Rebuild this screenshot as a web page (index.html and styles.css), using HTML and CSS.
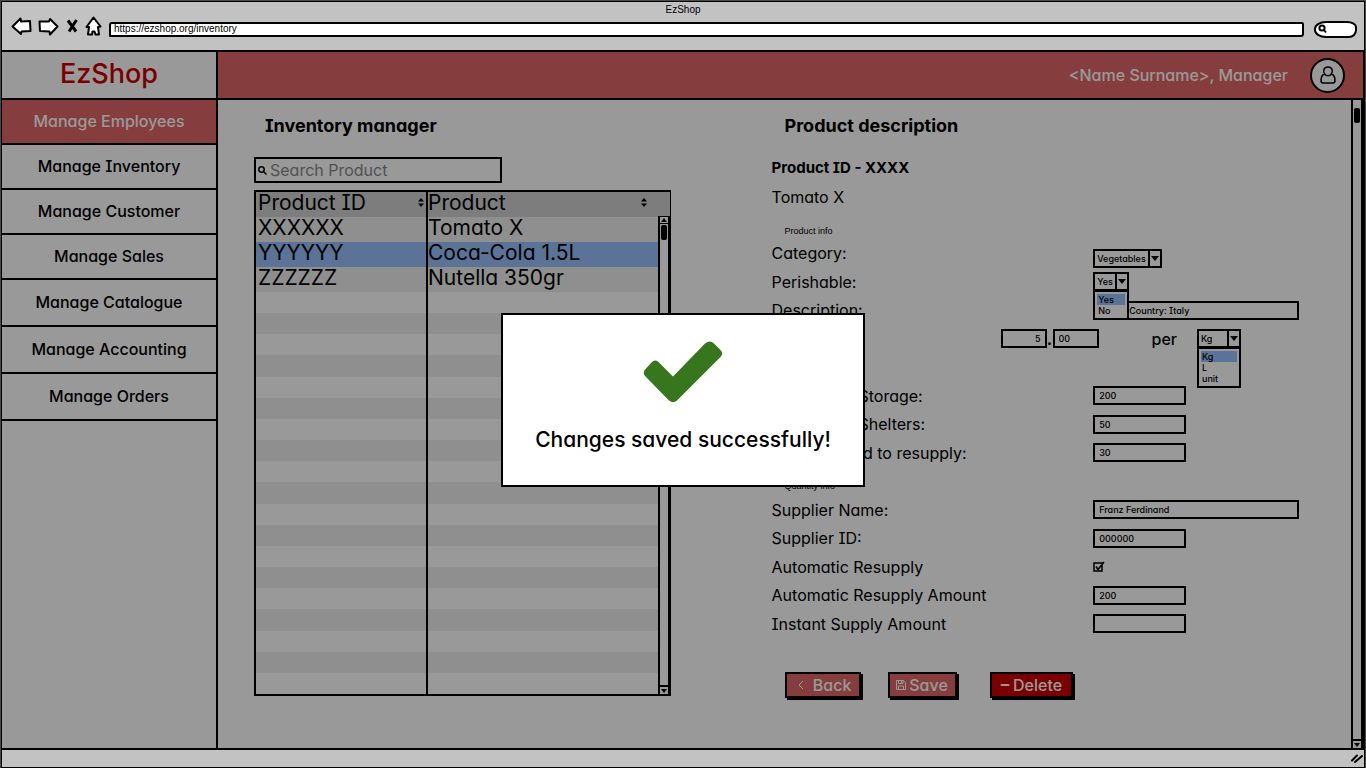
FILE: index.html
```html
<!DOCTYPE html>
<html lang="en">
<head>
<meta charset="utf-8">
<meta name="viewport" content="width=device-width, initial-scale=1">
<title>EzShop</title>
<link rel="stylesheet" href="styles.css">
</head>
<body>
<div class="window">
  <header class="chrome">
    <div class="chrome-title">EzShop</div>
    <div class="chrome-bar">
      <nav class="chrome-nav" aria-label="Browser">
        <button class="chrome-btn" aria-label="Back"><svg width="21" height="20" viewBox="0 0 21 20"><path d="M1.500 10.500 9.500 2.500 10 5.500 19 5 19.500 15 10.500 15.500 10 18Z"/></svg></button>
        <button class="chrome-btn" aria-label="Forward"><svg width="21" height="20" viewBox="0 0 21 20"><path d="M19.500 10.500 12 3 11 5.500 1.500 5.500 2 15 11.500 15.500 12 18.500Z"/></svg></button>
        <button class="chrome-btn" aria-label="Stop"><svg width="14" height="20" viewBox="0 0 14 20"><path class="cross" d="M3 4.500 11 15.500M11.500 4 4 15.500"/></svg></button>
        <button class="chrome-btn" aria-label="Home"><svg width="17" height="20" viewBox="0 0 17 20"><path d="M8.500 1.500 15.500 10.500 13 11 14 18.500 10.500 18.500 9.500 15.500 7.500 15.500 7 18.500 3 18.500 4 11 1.500 11Z"/></svg></button>
      </nav>
      <input class="address" type="text" value="https://ezshop.org/inventory" aria-label="Address">
      <label class="web-search"><svg width="9" height="10" viewBox="0 0 9 10"><circle cx="4" cy="4" r="2.600"/><path d="M6 6 8 8.500"/></svg><input type="text" aria-label="Search the web"></label>
    </div>
  </header>

  <div class="viewport">
    <div class="app">
      <div class="brand">EzShop</div>
      <div class="topbar">
        <span>&lt;Name Surname&gt;, Manager</span>
        <span class="avatar"><svg width="16" height="18" viewBox="0 0 16 18"><path d="M5 8.500C2.500 6 3.500 1 8 1s5.500 5 3 7.500C9.500 10 6.500 10 5 8.500ZM4.500 8C2 9 1 11.500 1 14.500 1 16.500 2 17 3 17h10c1 0 2-.5 2-2.500 0-3-1-5.500-3.500-6.500"/></svg></span>
      </div>

      <nav class="sidebar" aria-label="Sections">
        <a class="current" href="#employees">Manage Employees</a>
        <a href="#inventory">Manage Inventory</a>
        <a href="#customer">Manage Customer</a>
        <a href="#sales">Manage Sales</a>
        <a class="tall" href="#catalogue">Manage Catalogue</a>
        <a class="tall" href="#accounting">Manage Accounting</a>
        <a class="tall" href="#orders">Manage Orders</a>
      </nav>

      <main class="content">
        <section class="inventory">
          <h1>Inventory manager</h1>
          <label class="search"><svg width="9" height="9" viewBox="0 0 9 9"><circle cx="3.500" cy="3.500" r="2.700"/><path d="M5.500 5.500 8.500 8.500"/></svg><input type="text" placeholder="Search Product" aria-label="Search Product"></label>
          <div class="table-box">
            <table>
              <colgroup><col class="col-id"><col><col class="col-bar"></colgroup>
              <thead>
                <tr>
                  <th><div>Product ID<svg width="6" height="9" viewBox="0 0 6 9"><path d="M0 3.500 3 0 6 3.500ZM0 5.500 3 9 6 5.500Z"/></svg></div></th>
                  <th colspan="2"><div class="wide">Product<svg width="6" height="9" viewBox="0 0 6 9"><path d="M0 3.500 3 0 6 3.500ZM0 5.500 3 9 6 5.500Z"/></svg></div></th>
                </tr>
              </thead>
              <tbody>
                <tr class="item"><td>XXXXXX</td><td>Tomato X</td><td></td></tr>
                <tr class="item selected"><td>YYYYYY</td><td>Coca-Cola 1.5L</td><td></td></tr>
                <tr class="item"><td>ZZZZZZ</td><td>Nutella 350gr</td><td></td></tr>
                <tr><td></td><td></td><td></td></tr><tr><td></td><td></td><td></td></tr>
                <tr><td></td><td></td><td></td></tr><tr><td></td><td></td><td></td></tr>
                <tr><td></td><td></td><td></td></tr><tr><td></td><td></td><td></td></tr>
                <tr><td></td><td></td><td></td></tr><tr><td></td><td></td><td></td></tr>
                <tr><td></td><td></td><td></td></tr><tr><td></td><td></td><td></td></tr>
                <tr><td></td><td></td><td></td></tr><tr><td></td><td></td><td></td></tr>
                <tr><td></td><td></td><td></td></tr><tr><td></td><td></td><td></td></tr>
                <tr><td></td><td></td><td></td></tr><tr><td></td><td></td><td></td></tr>
                <tr><td></td><td></td><td></td></tr><tr><td></td><td></td><td></td></tr>
                <tr><td></td><td></td><td></td></tr>
              </tbody>
            </table>
            <div class="scrollbar table-scroll">
              <span class="step"><svg width="6" height="4" viewBox="0 0 6 4"><path d="M0 4 3 0 6 4Z"/></svg></span>
              <span class="thumb"></span>
              <span class="step down"><svg width="6" height="4" viewBox="0 0 6 4"><path d="M0 0 3 4 6 0Z"/></svg></span>
            </div>
          </div>
        </section>

        <section class="product">
          <h2>Product description</h2>
          <p class="product-id">Product ID - XXXX</p>
          <p class="product-name">Tomato X</p>
          <p class="group">Product info</p>
          <form class="fields">
            <div class="row"><label for="category">Category:</label>
              <span class="picker low category"><select id="category"><option>Vegetables</option></select><i><svg width="8" height="5" viewBox="0 0 8 5"><path d="M0 0 4 5 8 0Z"/></svg></i></span></div>
            <div class="row"><label for="perishable">Perishable:</label>
              <span class="picker perishable"><select id="perishable"><option>Yes</option><option>No</option></select><i><svg width="8" height="5" viewBox="0 0 8 5"><path d="M0 0 4 5 8 0Z"/></svg></i>
                <ul class="options"><li class="on">Yes</li><li>No</li></ul></span></div>
            <div class="row"><label for="description">Description:</label><input class="field full country" id="description" type="text" value="Country: Italy"></div>
            <div class="row price"><label for="price">Price:</label>
              <div class="price-parts">
                <input class="field amount units" id="price" type="text" value="5"><b>.</b><input class="field amount" type="text" value="00" aria-label="Cents">
                <label class="per" for="unit">per</label>
                <span class="picker unit"><select id="unit"><option>Kg</option><option>L</option><option>unit</option></select><i><svg width="8" height="5" viewBox="0 0 8 5"><path d="M0 0 4 5 8 0Z"/></svg></i>
                  <ul class="options"><li class="on">Kg</li><li>L</li><li>unit</li></ul></span>
              </div></div>
            <div class="row"></div>
            <div class="row"><label for="storage">Quantity in Storage:</label><input class="field" id="storage" type="text" value="200"></div>
            <div class="row"><label for="shelters">Quantity in Shelters:</label><input class="field" id="shelters" type="text" value="50"></div>
            <div class="row"><label for="resupply">Amount need to resupply:</label><input class="field" id="resupply" type="text" value="30"></div>
            <div class="row"><p class="group low">Quantity info</p></div>
            <div class="row"><label for="supplier">Supplier Name:</label><input class="field full" id="supplier" type="text" value="Franz Ferdinand"></div>
            <div class="row"><label for="supplier-id">Supplier ID:</label><input class="field" id="supplier-id" type="text" value="000000"></div>
            <div class="row"><label for="auto">Automatic Resupply</label>
              <span class="check"><input id="auto" type="checkbox" checked><svg width="12" height="11" viewBox="0 0 12 11"><path d="M1 2H9V10H1ZM3 5.500 5 8.500 11 1"/></svg></span></div>
            <div class="row"><label for="auto-amount">Automatic Resupply Amount</label><input class="field" id="auto-amount" type="text" value="200"></div>
            <div class="row"><label for="instant">Instant Supply Amount</label><input class="field" id="instant" type="text"></div>
          </form>
          <div class="actions">
            <button class="btn back"><svg width="6" height="10" viewBox="0 0 6 10"><path d="M5 1 1 5 5 9"/></svg>Back</button>
            <button class="btn save"><svg width="10" height="10" viewBox="0 0 10 10"><path d="M.5.5H7.500L9.500 2.500V9.500H.5ZM2.500.5V3.500H7V.5M2.500 9.500V6H7.500V9.500M5.500 1V3"/></svg>Save</button>
            <button class="btn delete"><svg width="10" height="10" viewBox="0 0 10 10"><path class="bold" d="M1.500 5H8.500"/></svg>Delete</button>
          </div>
        </section>

        <div class="scrollbar page-scroll">
          <span class="thumb"></span>
          <span class="step down"><svg width="6" height="4" viewBox="0 0 6 4"><path d="M0 0 3 4 6 0Z"/></svg></span>
        </div>
      </main>
    </div>

    <div class="backdrop">
      <div class="modal" role="dialog" aria-labelledby="saved">
        <svg width="80" height="62" viewBox="0 0 80 62"><path d="M30 35.500 62 2.500Q67-1.500 71 2.500L77.500 9Q81 12.500 77.500 16L34 59.500Q30 63 26 59.500L2.500 35.500Q-1 31.500 2.500 28L8.500 21.500Q12.500 17.500 16 21.500Z" class="tick"/></svg>
        <p id="saved">Changes saved successfully!</p>
      </div>
    </div>
  </div>

  <footer class="status"><svg width="14" height="11" viewBox="0 0 14 11"><path d="M2 7.500 7 2.500M5 9 12 3"/></svg></footer>
</div>
</body>
</html>
```
FILE: styles.css
```css
* { box-sizing: border-box; }

body {
  margin: 0;
  height: 100vh;
  background: #4a4a46;
  color: #000;
  font-family: Inter, "Noto Sans", sans-serif;
  font-feature-settings: "cv11", "cv08";
  font-size: 16px;
}

h1, h2, p, ul { margin: 0; padding: 0; }
svg { display: block; flex: none; }
a { color: inherit; text-decoration: none; }
button, input, select { font: inherit; font-feature-settings: inherit; color: inherit; }
input, select { min-width: 0; margin: 0; padding: 0; border: 0; background: none; outline: 0; }

.window {
  display: flex;
  flex-direction: column;
  min-height: 100%;
  padding: 1px 1px 0;
}

/* Browser frame */
.chrome {
  height: 50px;
  border: 1px solid #000;
  background: #c2c2c2;
  font: 10px/16px "Liberation Sans", Arial, sans-serif;
}
.chrome-title { text-align: center; }
.chrome-bar { display: flex; align-items: center; height: 22px; padding: 0 7px 0 9px; }
.chrome-nav { display: flex; align-items: center; gap: 6px; padding-bottom: 6px; }
.chrome-btn { padding: 0; border: 0; background: none; }
.chrome-btn path { fill: #fff; stroke: #000; stroke-width: 2; stroke-linejoin: round; }
.chrome-btn .cross { fill: none; stroke-width: 3; }
.address {
  flex: 1;
  height: 15px;
  margin: 0 10px 0 7px;
  padding: 0 3px;
  border: 2px solid #000;
  border-radius: 3px 2px 3px 1px;
  background: #fff;
}
.web-search {
  display: flex;
  align-items: center;
  width: 43px;
  height: 17px;
  padding-left: 2px;
  border: 2px solid #000;
  border-radius: 12px 10px 8px 12px / 8px 6px 8px 8px;
  background: #fff;
}
.web-search svg { fill: none; stroke: #000; stroke-width: 2; }
.web-search input { width: 20px; }

.viewport { position: relative; display: flex; flex: 1; }
.app {
  display: grid;
  flex: 1;
  grid-template: 48px 1fr / 216px 1fr;
  border: solid #000;
  border-width: 1px 2px 1px 1px;
  background: #fff;
}
.brand {
  border: solid #000;
  border-width: 0 2px 2px 0;
  color: #c00;
  font-size: 27px;
  font-weight: 500;
  line-height: 43px;
  text-align: center;
}
.topbar {
  display: flex;
  align-items: center;
  justify-content: flex-end;
  gap: 22px;
  padding-right: 18px;
  border-bottom: 2px solid #000;
  background: #e06666;
  color: #fff;
  font-weight: 500;
}
.avatar {
  display: grid;
  place-items: center;
  width: 35px;
  height: 35px;
  border: 2px solid #000;
  border-radius: 50%;
  background: #fff;
}
.avatar path { fill: none; stroke: #000; stroke-width: 1.5; }

.sidebar { border-right: 2px solid #000; font-weight: 500; text-align: center; }
.sidebar a { display: block; border-bottom: 2px solid #000; line-height: 43px; }
.sidebar .tall { line-height: 45px; }
.sidebar .current { background: #e06666; color: #fff; }

.content {
  position: relative;
  display: grid;
  grid-template-columns: 417fr 528fr;
  gap: 101px;
  padding: 0 64px 0 36px;
}
.inventory, .product { display: flex; flex-direction: column; }
h1, h2 { font-size: 18px; line-height: 24px; font-weight: 700; }

/* Inventory list */
.inventory { padding: 14px 0 52px; }
h1 { padding-left: 11px; }
.search {
  display: flex;
  align-items: center;
  gap: 3px;
  width: 248px;
  height: 26px;
  margin: 19px 0 7px;
  padding-left: 2px;
  border: 2px solid #000;
}
.search svg { fill: none; stroke: #000; stroke-width: 1.5; }
.search input { flex: 1; }
.search input::placeholder { color: #888; opacity: 1; }
.table-box {
  position: relative;
  display: grid;
  flex: 1;
  border: solid #000;
  border-width: 2px 1px 2px 2px;
}
table { width: 100%; height: 100%; border-collapse: collapse; table-layout: fixed; font-size: 21px; line-height: 21px; }
.col-id { width: 171px; }
.col-bar { width: 11px; }
th, td { padding: 0 2px; font-weight: 400; text-align: left; vertical-align: top; white-space: nowrap; }
td:nth-child(2), th:nth-child(2) { padding-left: 0; }
th:first-child, td:first-child { border-right: 2px solid #000; }
thead { background: #d0d0d0; }
thead tr, .item { height: 25px; }
tbody tr:nth-child(odd) { background: #efefef; }
tbody .selected { background: #96c0fb; }
th div { display: flex; align-items: center; justify-content: space-between; }
th .wide { padding-right: 21px; }

.scrollbar {
  position: absolute;
  right: 0;
  bottom: 0;
  display: flex;
  flex-direction: column;
  align-items: center;
  gap: 1px;
  width: 12px;
  border: solid #000;
  border-width: 0 2px;
  background: #fff;
}
.table-scroll { top: 24px; border-top-width: 1px; }
.page-scroll { top: 0; padding-top: 8px; }
.thumb { width: 6px; height: 15px; border-radius: 2px; background: #000; }
.step { display: grid; place-items: center; width: 8px; height: 7px; border-bottom: 1px solid #000; }
.down { margin-top: auto; border: 0; border-top: 2px solid #000; height: 9px; }

/* Product form */
.product { padding: 14px 0 50px; }
h2 { padding-left: 13px; }
.product-id { margin-top: 19px; font-size: 15px; font-weight: 700; line-height: 22px; }
.product-name { margin-top: 8px; line-height: 20px; }
.group { padding-left: 13px; font: 9px/12px "Liberation Sans", Arial, sans-serif; }
.product-name + .group { margin: 18px 0 2px; }
.row .group { padding-bottom: 4px; }
.fields { display: grid; flex: 1; grid-auto-rows: 1fr; margin-bottom: 34px; }
.row { display: grid; grid-template-columns: 322fr 206fr; align-items: center; white-space: nowrap; }
.row .low { align-self: end; }
.field { width: 93px; height: 19px; padding: 0 4px; border: 2px solid #000; font-size: 9px; font-weight: 500; }
.full { width: 100%; }
.country { padding-left: 34px; }
.price { grid-template-columns: 1fr auto; }
.price-parts { display: flex; align-items: center; padding-right: 58px; }
.amount { width: 46px; }
.units { text-align: right; }
.price b { width: 6px; text-align: center; }
.per { margin: 0 20px 0 53px; font-weight: 500; }

.picker {
  position: relative;
  display: flex;
  height: 19px;
  border: 2px solid #000;
  font-size: 9px;
  font-weight: 500;
}
.picker select { flex: 1; padding-left: 2px; appearance: none; }
.picker i { display: grid; place-items: center; width: 12px; border-left: 2px solid #000; pointer-events: none; }
.category { width: 69px; }
.perishable { width: 36px; }
.unit { width: 44px; }
.options {
  position: absolute;
  z-index: 1;
  top: 16px;
  left: -2px;
  right: -2px;
  padding: 2px;
  border: 2px solid #000;
  background: #fff;
  line-height: 11px;
  list-style: none;
}
.options li { padding-left: 1px; }
.options .on { background: #96c0fb; }

.check { position: relative; width: 12px; height: 11px; }
.check input { position: absolute; inset: 0; opacity: 0; }
.check path { fill: none; stroke: #000; stroke-width: 1.5; }

.actions { display: flex; gap: 27px; padding-left: 13px; }
.btn {
  display: flex;
  align-items: center;
  justify-content: center;
  gap: 3px;
  height: 26px;
  padding: 0;
  border: 2px solid #000;
  background: #e06666;
  box-shadow: 2px 2px 0 #000;
  color: #fff;
  font-weight: 500;
}
.btn path { fill: none; stroke: #fff; stroke-width: 1; }
.btn .bold { stroke-width: 2; stroke-linecap: round; }
.back { width: 76px; gap: 9px; padding-left: 4px; }
.save { width: 69px; }
.delete { width: 83px; margin-left: 6px; background: #c00; }

/* Confirmation */
.backdrop {
  position: absolute;
  z-index: 2;
  inset: 0;
  display: grid;
  place-items: center;
  background: rgba(0, 0, 0, .4);
}
.modal {
  display: flex;
  flex-direction: column;
  align-items: center;
  gap: 22px;
  padding: 26px 32px 30px;
  border: 2px solid #000;
  background: #fff;
  font-size: 21px;
  font-weight: 500;
  line-height: 30px;
}
.tick { fill: #38761d; }

.status {
  display: flex;
  align-items: center;
  justify-content: flex-end;
  height: 19px;
  border: 1px solid #000;
  background: #c2c2c2;
}
.status path { fill: none; stroke: #000; stroke-width: 2; stroke-linecap: round; }
```
